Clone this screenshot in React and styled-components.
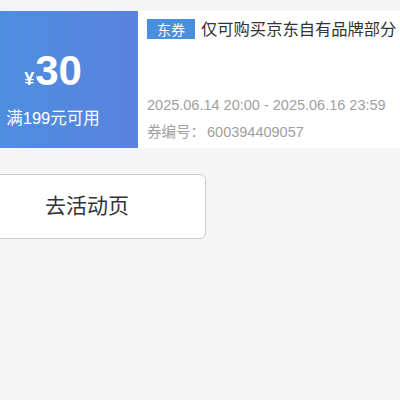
import React from 'react'
import styled, { createGlobalStyle } from 'styled-components'

const GlobalStyle = createGlobalStyle`
	html, body {
		margin: 0;
		padding: 0;
		background: #f5f5f5;
		overflow: hidden;
	}
	body {
		font-family: "Liberation Sans", "Noto Sans CJK SC", sans-serif;
	}
`

const coupon = {
	amount: '30',
	limit: '满199元可用',
	tag: '东券',
	title: '仅可购买京东自有品牌部分',
	period: '2025.06.14 20:00 - 2025.06.16 23:59',
	code: '600394409057',
}

const App = () => {
	return (
		<>
			<GlobalStyle />
			<Page>
				<Card>
					<Value>
						<Amount>
							<Yen>¥</Yen>
							<Num>{coupon.amount}</Num>
						</Amount>
						<Limit>{coupon.limit}</Limit>
					</Value>
					<Info>
						<TitleRow>
							<Tag>{coupon.tag}</Tag>
							<Title>{coupon.title}</Title>
						</TitleRow>
						<Meta>
							<MetaLine>{coupon.period}</MetaLine>
							<MetaLine>券编号：<Code>{coupon.code}</Code></MetaLine>
						</Meta>
					</Info>
				</Card>
				<Button>去活动页</Button>
			</Page>
		</>
	)
}

export default App

const Page = styled.div`
	width: 432px;
	margin-left: -32px;
	padding-top: 11px;
	display: flex;
	flex-direction: column;
	gap: 26px;
`
const Card = styled.div`
	height: 137px;
	display: flex;
	background: #fff;
`
const Value = styled.div`
	width: 170px;
	flex-shrink: 0;
	display: flex;
	flex-direction: column;
	align-items: center;
	justify-content: center;
	padding-top: 16px;
	box-sizing: border-box;
	background: linear-gradient(90deg, #4a91e0 0%, #5a82dc 100%);
	color: #fff;
`
const Amount = styled.div`
	display: flex;
	align-items: baseline;
	height: 48px;
`
const Yen = styled.span`
	font-size: 18px;
	font-weight: 700;
	margin-right: 1px;
`
const Num = styled.span`
	font-size: 42px;
	font-weight: 700;
	line-height: 48px;
`
const Limit = styled.div`
	font-size: 16.5px;
	margin-top: 10px;
`
const Info = styled.div`
	flex: 1;
	min-width: 0;
	display: flex;
	flex-direction: column;
	justify-content: space-between;
	padding: 7px 0 6px 9px;
`
const TitleRow = styled.div`
	display: flex;
	align-items: center;
	gap: 6px;
	white-space: nowrap;
	overflow: hidden;
`
const Tag = styled.span`
	width: 48px;
	height: 20px;
	display: flex;
	align-items: center;
	justify-content: center;
	background: #4a8ede;
	color: #fff;
	font-size: 14px;
	flex-shrink: 0;
`
const Title = styled.span`
	font-size: 16.3px;
	color: #333;
	line-height: 22px;
`
const Meta = styled.div`
	display: flex;
	flex-direction: column;
	gap: 8px;
`
const MetaLine = styled.div`
	font-size: 14.5px;
	color: #a0a0a0;
	line-height: 19px;
	white-space: nowrap;
`
const Code = styled.span`
	margin-left: 2px;
`
const Button = styled.button`
	width: 238px;
	height: 65px;
	background: #fff;
	border: 1px solid #ccc;
	border-radius: 6px;
	font-family: "Noto Sans CJK SC", sans-serif;
	font-size: 21px;
	color: #333;
	padding: 0 0 5px;
`
